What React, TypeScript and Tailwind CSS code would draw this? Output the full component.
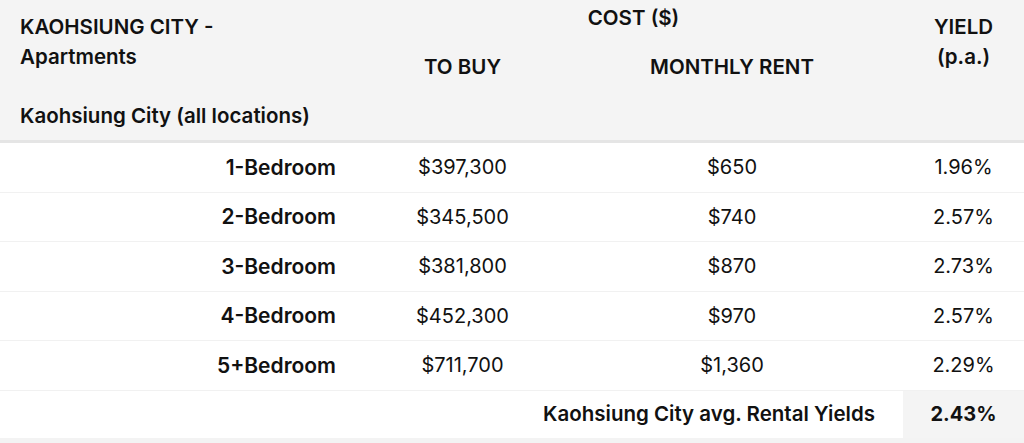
import React from "react";

const rows = [
  { label: "1-Bedroom", buy: "$397,300", rent: "$650", yld: "1.96%" },
  { label: "2-Bedroom", buy: "$345,500", rent: "$740", yld: "2.57%" },
  { label: "3-Bedroom", buy: "$381,800", rent: "$870", yld: "2.73%" },
  { label: "4-Bedroom", buy: "$452,300", rent: "$970", yld: "2.57%" },
  { label: "5+Bedroom", buy: "$711,700", rent: "$1,360", yld: "2.29%" },
];

export default function App() {
  return (
    <div className="w-[1024px] h-[443px] overflow-hidden bg-[#f3f3f3] text-[#111] font-['Inter','Liberation_Sans',sans-serif] text-[20px]">
      <div className="bg-white">
        {/* header */}
        <div className="grid grid-cols-[364px_197px_342px_121px] h-[143px] bg-[#f4f4f4] border-b-[3px] border-[#e5e5e5] font-semibold text-[20.5px]">
          <div className="pl-5 pt-[12px] leading-[30px] whitespace-nowrap">
            <div>KAOHSIUNG CITY -</div>
            <div>Apartments</div>
            <div className="mt-[29px]">Kaohsiung City (all locations)</div>
          </div>
          <div className="col-span-2 flex flex-col">
            <div className="text-center pt-[3px] leading-[30px]">COST ($)</div>
            <div className="flex mt-[19px] leading-[30px]">
              <div className="w-[197px] text-center">TO BUY</div>
              <div className="w-[342px] text-center">MONTHLY RENT</div>
            </div>
          </div>
          <div className="text-center pt-[12px] leading-[30px]">
            <div>YIELD</div>
            <div>(p.a.)</div>
          </div>
        </div>

        {/* body */}
        {rows.map((r) => (
          <div
            key={r.label}
            className="grid grid-cols-[364px_197px_342px_121px] h-[49.5px] items-center border-b border-[#f1f1f1]"
          >
            <div className="text-right pr-7 font-semibold text-[21px]">{r.label}</div>
            <div className="text-center">{r.buy}</div>
            <div className="text-center">{r.rent}</div>
            <div className="text-center">{r.yld}</div>
          </div>
        ))}

        <div className="grid grid-cols-[903px_121px] h-[47.5px] items-stretch">
          <div className="flex items-center justify-end pr-7 font-semibold text-[20.5px]">
            Kaohsiung City avg. Rental Yields
          </div>
          <div className="flex items-center justify-center bg-[#f4f4f4] font-bold">2.43%</div>
        </div>
      </div>
    </div>
  );
}
